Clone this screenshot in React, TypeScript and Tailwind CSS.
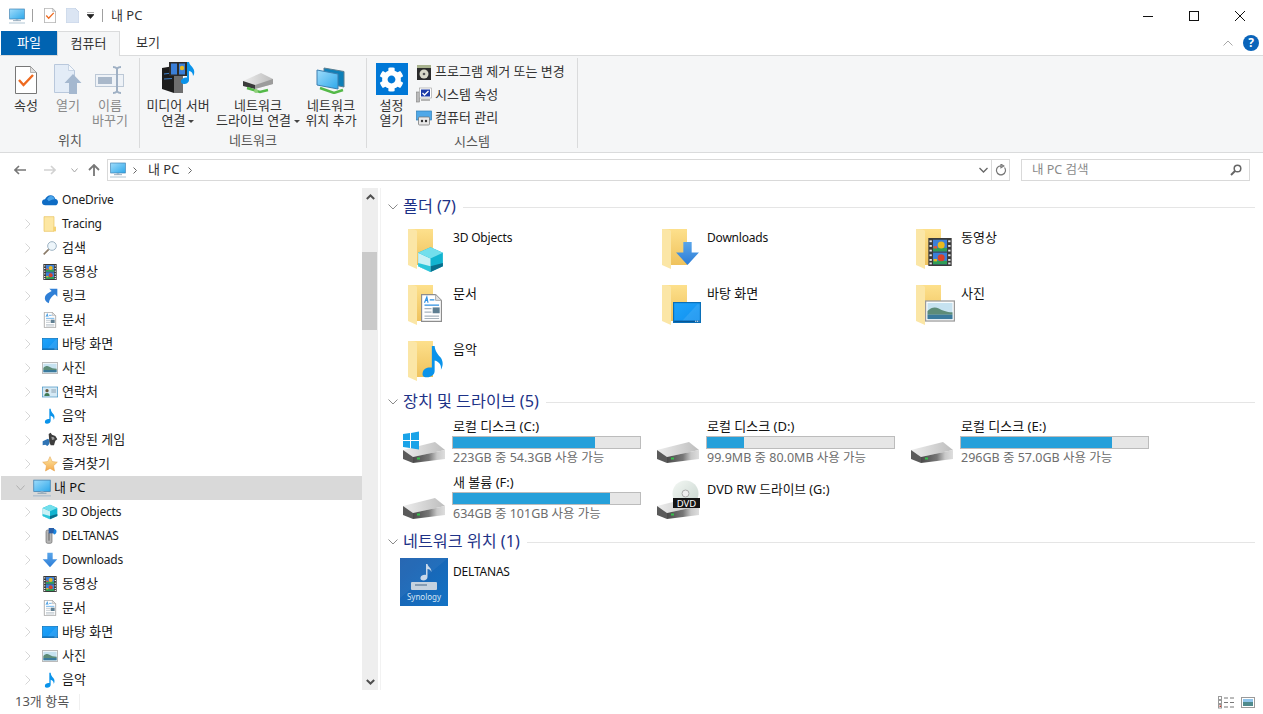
import * as React from "react";
import { FaCog } from "react-icons/fa";

const FONT = "font-['Noto_Sans','Noto_Sans_CJK_KR',sans-serif]";

// latin labels run narrower than the hangul ones in the picture
function isLatin(label: string) {
  return /^[\x00-\x7f]+$/.test(label);
}

function labelSize(label: string) {
  return isLatin(label) ? "text-[12px] tracking-[-0.2px]" : "text-[13px]";
}

// all small glyphs are drawn on a 24x24 grid, so nav icons and folder overlays share them
function Cube() {
  return (
    <g>
      <path d="M12 1 23 6v12l-11 5L1 18V6z" fill="#12b4d0" />
      <path d="M1 6l11 5v12L1 18z" fill="#c9f1f5" />
      <path d="M12 1 23 6l-11 5L1 6z" fill="#72dfec" />
      <path d="M12 18l11-3v3l-11 5z" fill="#0a6f8c" />
      <path d="M12 18 1 15v3l11 5z" fill="#2cc6da" />
    </g>
  );
}

function ArrowDown() {
  return <path d="M8 1h8v10h7L12 23 1 11h7z" fill="url(#arrow)" />;
}

function Film() {
  return (
    <g>
      <rect x="2" y="0" width="20" height="24" fill="#3a3a3a" />
      <rect x="6" y="1.5" width="12" height="10" fill="#3b7fd8" />
      <rect x="6" y="12.5" width="12" height="10" fill="#3b7fd8" />
      <rect x="6" y="8.5" width="12" height="3" fill="#2f9e57" />
      <rect x="6" y="19.5" width="12" height="3" fill="#2f9e57" />
      <circle cx="13" cy="6" r="3" fill="#e8b91f" />
      <circle cx="13" cy="17" r="3" fill="#d8432a" />
      <rect x="6.5" y="7" width="3" height="2" fill="#e0553a" />
      <rect x="6.5" y="18" width="3" height="2" fill="#e8b91f" />
      {[2, 6, 10, 14, 18, 21].map((y) => (
        <g key={y}>
          <rect x="3" y={y} width="2" height="1.6" fill="#e6e6e6" />
          <rect x="19" y={y} width="2" height="1.6" fill="#e6e6e6" />
        </g>
      ))}
    </g>
  );
}

function Doc() {
  return (
    <g>
      <path d="M3.5.5h12l5 5v18h-17z" fill="#fff" stroke="#8d8d8d" />
      <path d="M15.5.5v5h5z" fill="#e2e2e2" stroke="#a0a0a0" strokeWidth=".7" />
      <path d="M6 7.500l2-5 1 5M6.500 5.500h2.500" stroke="#2d8fe0" strokeWidth="1" fill="none" />
      <path d="M10.500 5h4M6 9.500h12.500" stroke="#2d8fe0" strokeWidth="1" />
      <path d="M6 12.500h6M6 15.500h6M6 19h12.500M6 21h12.500" stroke="#a8b4bd" strokeWidth="1" />
      <rect x="13" y="11.500" width="6" height="5" fill="#5f7f92" />
    </g>
  );
}

function Desk() {
  return (
    <g>
      <rect x="0.5" y="3.5" width="23" height="17" fill="url(#desk)" stroke="#0a6fb8" />
      <path d="M8 19 21 5h2v14z" fill="#ffffff" opacity=".1" />
      <path d="M1 19.5h22" stroke="#064c86" />
      <path d="M19 19.5h3.5" stroke="#fff" strokeDasharray="1 .6" />
    </g>
  );
}

function Photo() {
  return (
    <g>
      <rect x="0.5" y="4" width="23" height="16" fill="#fff" stroke="#9a9a9a" />
      <rect x="2" y="5.5" width="20" height="13" fill="#c6e2f0" />
      <path d="M2 12c3-3 6-3.500 9-2s6 3 11 3v2H2z" fill="#5d8c78" />
      <rect x="2" y="15" width="20" height="3.500" fill="#3a7a9c" />
    </g>
  );
}

function Note() {
  return (
    <path
      d="M11 1h2c.4 4 2 5.500 4 8s2.500 6 .5 9c.4-3-.800-5.500-4.500-6.500V19c0 2.500-2.500 4.500-5.500 4.500S4 22 4.500 19.800 7.500 16 11 16.500z"
      fill="#0a93ea"
    />
  );
}

function Contact() {
  return (
    <g>
      <rect x="0.5" y="4.500" width="23" height="15" fill="#d5e9f5" stroke="#3f8fc0" />
      <circle cx="7.500" cy="10" r="2.500" fill="#6b5a3c" />
      <path d="M3.500 18c0-3 1.500-4.500 4-4.500s4 1.500 4 4.500z" fill="#3f7a55" />
      <path d="M14 9h7M14 12h7" stroke="#7b8e9c" strokeWidth="1.200" />
    </g>
  );
}

function Games() {
  return (
    <g>
      <path d="M1 14l8-4 2 2v6l-3 3-3-2-4 1z" fill="#2f74b5" />
      <path d="M10 3l3-2 2 3 5 2 3 5-3 2-2 7h-5l-2-5z" fill="#3d3d3d" />
      <path d="M14 7l4 1 1 3-4 1z" fill="#9a9a9a" />
    </g>
  );
}

function Star() {
  return (
    <path
      d="M12 1l3.300 7.300 7.700.9-5.700 5.400 1.500 7.900L12 18.600 5.200 22.500l1.500-7.900L1 9.200l7.700-.9z"
      fill="url(#star)"
      stroke="#e0973a"
      strokeWidth=".7"
    />
  );
}

function Magnifier() {
  return (
    <g fill="none">
      <circle cx="15" cy="9" r="6.500" fill="#eef6fb" stroke="#9fb4c4" strokeWidth="1.500" />
      <path d="M10 14 2.500 21.500" stroke="#8a7a68" strokeWidth="2.400" />
    </g>
  );
}

function LinkArrow() {
  return (
    <path
      d="M11 1h12v12l-3.500-3.500C15 12 11.500 16 10 23 5.500 20.500 3.500 17 4.500 13 5.500 9.500 10 7 14.500 4.500z"
      fill="#2f7fd6"
    />
  );
}

function Cloud() {
  return (
    <g>
      <path
        d="M5 20c-3 0-5-2-5-4.500S2 11 4.500 11C6 7.500 9 5 13 5c3.500 0 6 2.500 7 5.500 2.500.3 4 2.500 4 4.700S22 20 19.500 20z"
        fill="#0f6cc4"
      />
      <path d="M7.500 11C9 8 11 6 13.500 6c3 0 5 2.500 5.500 5-4 .5-7 2-9 3-1-1.500-1.500-2.500-2.500-3z" fill="#49a4ea" />
    </g>
  );
}

function NavFolder() {
  return (
    <g>
      <path d="M3 1h15v22H3z" fill="#fde7a3" stroke="#e8c35e" />
      <rect x="17" y="16" width="4" height="7" fill="#f5d272" />
    </g>
  );
}

function NasDrive() {
  return (
    <g>
      <rect x="6" y="3" width="9" height="20" rx="2.500" fill="#b5b5b5" stroke="#6b6b6b" />
      <rect x="9" y="7" width="3" height="12" fill="#8a8a8a" />
      <rect x="10" y="0" width="8" height="8" fill="#2a5fa8" />
      <path d="M18 1c3 1 5 3 3 7-1 2-3 2-4 1z" fill="#1c86e0" />
    </g>
  );
}

function MonitorGlyph() {
  return (
    <g>
      <rect x="1" y="1.500" width="22" height="15" fill="url(#screen)" stroke="#3c7fb0" />
      <rect x="10" y="16.500" width="4" height="2" fill="#9db6c8" />
      <path d="M6 19h12" stroke="#7f99ad" strokeWidth="1.200" />
      <path d="M0 22.500h24" stroke="#9db6c8" strokeWidth="1.200" />
    </g>
  );
}

function Glyph({ children, className = "w-4 h-4" }: { children: React.ReactNode; className?: string }) {
  return (
    <svg viewBox="0 0 24 24" className={`${className} shrink-0`}>
      {children}
    </svg>
  );
}

// big yellow folder with a glyph laid in its lower right corner
function BigFolder({ children, x, y, s }: { children: React.ReactNode; x: number; y: number; s: number }) {
  return (
    <svg viewBox="0 0 48 48" className="w-12 h-12 shrink-0">
      <path d="M8 5h25v36H17z" fill="url(#folderBack)" />
      <path d="M8 5c3 0 6 0 8 1 1 .500 1 1 1 2v37l-9-4z" fill="#fbe6a6" />
      <g transform={`translate(${x} ${y}) scale(${s / 24})`}>{children}</g>
    </svg>
  );
}

function Drive() {
  return (
    <g>
      <path d="M3 26 35 18l10 8-32 7z" fill="url(#driveTop)" />
      <path d="M3 26l10 7v6l-10-4z" fill="#5a5a5a" />
      <path d="M13 33l32-7v9l-32 4z" fill="url(#driveFront)" />
      <rect x="17" y="33.500" width="3" height="2" fill="#35c04a" />
    </g>
  );
}

function DriveIcon({ kind }: { kind?: "win" | "dvd" }) {
  return (
    <svg viewBox="0 0 48 48" className="w-12 h-12 shrink-0 mt-[8px]">
      <Drive />
      {kind === "win" && (
        <path d="M3 10l7-1v7H3zM11 9l8-1.500V16h-8zM3 17h7v7l-7-1zM11 17h8v8.500l-8-1.300z" fill="#1aa3e8" />
      )}
      {kind === "dvd" && (
        <g>
          <circle cx="31.500" cy="13.500" r="13" fill="url(#disc)" />
          <circle cx="31.500" cy="13.500" r="3.500" fill="#eee" stroke="#aaa" />
          <rect x="19" y="18" width="27" height="10" fill="#151515" />
          <text x="32.500" y="26.500" textAnchor="middle" fontSize="9.500" fill="#fff" fontFamily="Noto Sans">
            DVD
          </text>
        </g>
      )}
    </svg>
  );
}

function SynologyIcon() {
  return (
    <svg viewBox="0 0 48 48" className="w-12 h-12 shrink-0">
      <rect width="48" height="48" fill="url(#syno)" />
      <path d="M0 0h48L0 40z" fill="#fff" opacity=".05" />
      <path d="M26 6h1.500c.5 3 4 3.500 4 8-1-2-2-3-4-3v8c0 2-2 3.500-4 3.500s-3.500-1-3-3 3-3 5.500-2.500z" fill="#c8d8ea" />
      <rect x="11" y="24" width="26" height="8" rx="1" fill="#c5d2df" />
      <path d="M15 27h12" stroke="#6f8aa5" strokeWidth="1.500" />
      <text x="24" y="42" textAnchor="middle" fontSize="8" fill="#d5e4f3" fontFamily="Noto Sans">
        Synology
      </text>
    </svg>
  );
}

function PropsIcon({ size = "w-[22px] h-[28px]" }: { size?: string }) {
  return (
    <svg viewBox="0 0 22 28" className={size}>
      <path d="M.5.500h15l6 6v21H.5z" fill="#fff" stroke="#777" />
      <path d="M15.500.500v6h6z" fill="#ddd" stroke="#999" strokeWidth=".7" />
      <path d="M4 14l4.500 5L18 9" fill="none" stroke="#ee6a20" strokeWidth="2.400" />
    </svg>
  );
}

function OpenIcon() {
  return (
    <svg viewBox="0 0 28 30" className="w-[28px] h-[30px]">
      <path d="M.5.500h14l6 6v22H.5z" fill="#e3ecf7" stroke="#b9c8dc" />
      <path d="M14.500.500v6h6z" fill="#f5f8fc" stroke="#b9c8dc" strokeWidth=".7" />
      <path d="M19 10l8.500 9H23v11h-8V19h-4.500z" fill="#a5b8cf" />
    </svg>
  );
}

function RenameIcon() {
  return (
    <svg viewBox="0 0 30 28" className="w-[30px] h-[28px]">
      <rect x=".5" y="8.500" width="28" height="12" fill="#eef2f7" stroke="#bcc8d6" />
      <rect x="3" y="11" width="14" height="7" fill="#a9b8ca" />
      <path d="M18 1c2 0 3 .500 4 1.500C23 1.500 24 1 26 1M22 2.500v23M18 27c2 0 3-.500 4-1.500 1 1 2 1.500 4 1.500" fill="none" stroke="#9fb0c4" strokeWidth="2" />
    </svg>
  );
}

function MediaServerIcon() {
  return (
    <svg viewBox="0 0 34 32" className="w-[34px] h-[32px]">
      <path d="M1 6l12-2v27L1 27z" fill="#1d1d1d" />
      <path d="M13 4l9 3v24h-9z" fill="#6f6f6f" />
      <path d="M3 12l8-1M3 17l8-.500" stroke="#3e7fc8" strokeWidth="1.200" />
      <rect x="8" y="0" width="18" height="14" fill="#2c2c2c" />
      <rect x="10" y="1.500" width="6" height="11" fill="#3b7fd8" />
      <rect x="18" y="1.500" width="6" height="11" fill="#3b7fd8" />
      <circle cx="21" cy="6" r="2.200" fill="#e8b91f" />
      <path d="M26 0h2c.4 3 3 4 4.500 7s.5 6-.5 7c0-3-1.500-4.500-4-5v9c0 2.500-2.500 4-5 4s-3.500-1.500-3-3.500 3.500-3.500 6-3z" fill="#0a93ea" />
    </svg>
  );
}

function NetDriveIcon() {
  return (
    <svg viewBox="0 0 34 24" className="w-[34px] h-[24px]">
      <path d="M2 11 20 3l12 6v5l-18 5-12-3z" fill="url(#driveTop)" />
      <path d="M2 11l12 4v4L2 16z" fill="#3b3b3b" />
      <path d="M14 15l18-6v5l-18 5z" fill="#9c9c9c" />
      <path d="M6 18l13 4 8-2" fill="none" stroke="#54b948" strokeWidth="2.400" />
      <circle cx="15" cy="21" r="2" fill="#8fd07a" />
    </svg>
  );
}

function NetLocationIcon() {
  return (
    <svg viewBox="0 0 30 28" className="w-[30px] h-[28px]">
      <path d="M8 2l20 3.500V21L8 17z" fill="#0e7fb8" stroke="#5b7f92" />
      <path d="M1 4l21 4v15L1 19z" fill="url(#screen)" stroke="#3c7fb0" />
      <path d="M4 22l14 5 9-3" fill="none" stroke="#54b948" strokeWidth="2.400" />
    </svg>
  );
}

function UninstallIcon() {
  return (
    <svg viewBox="0 0 16 16" className="w-4 h-4 shrink-0">
      <rect x="1" y="1" width="14" height="4" fill="#a9b38f" />
      <rect x="1" y="4" width="14" height="12" fill="#2b2b2b" />
      <circle cx="8" cy="10" r="4.500" fill="#d8d8c8" />
      <circle cx="8" cy="10" r="1.300" fill="#555" />
    </svg>
  );
}

function SysPropsIcon() {
  return (
    <svg viewBox="0 0 16 16" className="w-4 h-4 shrink-0">
      <rect x="0.500" y="5" width="3" height="10" fill="#b9b9b9" stroke="#808080" strokeWidth=".6" />
      <rect x="3.500" y="1" width="12" height="10" fill="#fff" stroke="#9a9a9a" strokeWidth=".6" />
      <rect x="5" y="2.500" width="9" height="7" fill="#1c3aa8" />
      <path d="M6.500 6l2 2 4-4" fill="none" stroke="#fff" strokeWidth="1.300" />
      <rect x="5" y="12" width="9" height="2" fill="#b5b5b5" />
    </svg>
  );
}

function ManageIcon() {
  return (
    <svg viewBox="0 0 16 16" className="w-4 h-4 shrink-0">
      <rect x=".5" y="1" width="15" height="9" fill="#4fa8e8" stroke="#2f7fb8" strokeWidth=".7" />
      <rect x="2.500" y="7" width="11" height="8" rx="1" fill="#e8e8e8" stroke="#6f6f6f" strokeWidth=".7" />
      <circle cx="6" cy="11" r="1.200" fill="#333" />
      <circle cx="10" cy="11" r="1.200" fill="#333" />
    </svg>
  );
}

function Defs() {
  return (
    <svg className="block w-0 h-0">
      <defs>
        <linearGradient id="folderBack" x1="0" y1="0" x2="0" y2="1">
          <stop offset="0" stopColor="#fde08c" />
          <stop offset="1" stopColor="#efc25c" />
        </linearGradient>
        <linearGradient id="arrow" x1="0" y1="0" x2="0" y2="1">
          <stop offset="0" stopColor="#5aa6ea" />
          <stop offset="1" stopColor="#2c7cd6" />
        </linearGradient>
        <linearGradient id="desk" x1="0" y1="0" x2="1" y2="1">
          <stop offset="0" stopColor="#1fa4fb" />
          <stop offset="1" stopColor="#0f8fee" />
        </linearGradient>
        <linearGradient id="screen" x1="0" y1="0" x2="1" y2="1">
          <stop offset="0" stopColor="#9fdcfb" />
          <stop offset="1" stopColor="#2ea8ea" />
        </linearGradient>
        <linearGradient id="star" x1="0" y1="0" x2="0" y2="1">
          <stop offset="0" stopColor="#fde9a8" />
          <stop offset="1" stopColor="#f5a94a" />
        </linearGradient>
        <linearGradient id="driveTop" x1="0" y1="0" x2="1" y2="0">
          <stop offset="0" stopColor="#ededed" />
          <stop offset="1" stopColor="#bdbdbd" />
        </linearGradient>
        <linearGradient id="driveFront" x1="0" y1="0" x2="1" y2="0">
          <stop offset="0" stopColor="#4a4a4a" />
          <stop offset=".5" stopColor="#777777" />
          <stop offset=".75" stopColor="#c8c8c8" />
          <stop offset="1" stopColor="#dedede" />
        </linearGradient>
        <linearGradient id="disc" x1="0" y1="0" x2="1" y2="1">
          <stop offset="0" stopColor="#f4f8f4" />
          <stop offset="1" stopColor="#c7d4ce" />
        </linearGradient>
        <linearGradient id="syno" x1="0" y1="0" x2="1" y2="1">
          <stop offset="0" stopColor="#1d5fae" />
          <stop offset="1" stopColor="#1272c4" />
        </linearGradient>
      </defs>
    </svg>
  );
}

function Caret() {
  return <span className="inline-block ml-[3px] align-middle border-x-[3px] border-t-[3px] border-x-transparent border-t-[#444]" />;
}

function RibbonButton({ icon, lines, muted, center }: { icon: React.ReactNode; lines: React.ReactNode[]; muted?: boolean; center: string }) {
  return (
    <div className={`flex flex-col items-center shrink-0 ${center}`}>
      <div className="h-[38px] pb-[2px] flex items-end justify-center">{icon}</div>
      <div className={`mt-[2px] text-center text-[13px] leading-[15px] whitespace-nowrap ${muted ? "text-[#8a8a8a]" : "text-[#333]"}`}>
        {lines.map((l, i) => (
          <div key={i}>{l}</div>
        ))}
      </div>
    </div>
  );
}

function RibbonGroup({ label, width, children }: { label: string; width: string; children: React.ReactNode }) {
  return (
    <div className={`${width} h-[90px] mt-[2px] border-r border-[#dadbdc] flex flex-col shrink-0`}>
      <div className="flex-1 flex">{children}</div>
      <div className="h-[22px] text-center text-[13px] leading-[24px] text-[#555]">{label}</div>
    </div>
  );
}

const navRows: { label: string; glyph: React.ReactNode; noChevron?: boolean }[] = [
  { label: "OneDrive", glyph: <Cloud />, noChevron: true },
  { label: "Tracing", glyph: <NavFolder /> },
  { label: "검색", glyph: <Magnifier /> },
  { label: "동영상", glyph: <Film /> },
  { label: "링크", glyph: <LinkArrow /> },
  { label: "문서", glyph: <Doc /> },
  { label: "바탕 화면", glyph: <Desk /> },
  { label: "사진", glyph: <Photo /> },
  { label: "연락처", glyph: <Contact /> },
  { label: "음악", glyph: <Note /> },
  { label: "저장된 게임", glyph: <Games /> },
  { label: "즐겨찾기", glyph: <Star /> },
];

const pcRows: { label: string; glyph: React.ReactNode }[] = [
  { label: "3D Objects", glyph: <Cube /> },
  { label: "DELTANAS", glyph: <NasDrive /> },
  { label: "Downloads", glyph: <ArrowDown /> },
  { label: "동영상", glyph: <Film /> },
  { label: "문서", glyph: <Doc /> },
  { label: "바탕 화면", glyph: <Desk /> },
  { label: "사진", glyph: <Photo /> },
  { label: "음악", glyph: <Note /> },
];

function NavChevron() {
  return (
    <svg viewBox="0 0 6 10" className="w-[6px] h-[10px] shrink-0">
      <path d="M.5.500 5 5 .5 9.500" fill="none" stroke="#d6d6d6" />
    </svg>
  );
}

function NavRow({ label, glyph, noChevron }: { label: string; glyph: React.ReactNode; noChevron?: boolean }) {
  return (
    <div className="h-6 flex items-center pl-[24px] shrink-0">
      {noChevron ? <span className="w-[6px]" /> : <NavChevron />}
      <span className="ml-[11px]">
        <Glyph>{glyph}</Glyph>
      </span>
      <span className={`ml-[4px] text-[#1a1a1a] whitespace-nowrap ${labelSize(label)}`}>{label}</span>
    </div>
  );
}

function SectionHeader({ title, className = "" }: { title: string; className?: string }) {
  return (
    <div className={`h-[24px] flex items-center shrink-0 ${className}`}>
      <svg viewBox="0 0 10 6" className="w-[10px] h-[6px] ml-[7px] shrink-0">
        <path d="M.5.500 5 5 9.500.500" fill="none" stroke="#8a8a8a" />
      </svg>
      <span className="ml-[5px] -mt-[2px] text-[16.2px] text-[#1e3287] whitespace-nowrap">{title}</span>
      <span className="ml-[7px] h-px flex-1 bg-[#e5e5e5]" />
    </div>
  );
}

function FolderItem({ label, children }: { label: string; children: React.ReactNode }) {
  return (
    <div className="h-[56px] flex items-start">
      {children}
      <span className={`ml-[5px] leading-[18px] text-[#111] whitespace-nowrap ${labelSize(label)} ${isLatin(label) ? "mt-[5px]" : "mt-[4px]"}`}>{label}</span>
    </div>
  );
}

const drives = [
  { label: "로컬 디스크 (C:)", info: "223GB 중 54.3GB 사용 가능", pct: 76, kind: "win" as const },
  { label: "로컬 디스크 (D:)", info: "99.9MB 중 80.0MB 사용 가능", pct: 20 },
  { label: "로컬 디스크 (E:)", info: "296GB 중 57.0GB 사용 가능", pct: 81 },
  { label: "새 볼륨 (F:)", info: "634GB 중 101GB 사용 가능", pct: 84 },
];

function DriveItem({ label, info, pct, kind }: { label: string; info: string; pct: number; kind?: "win" }) {
  return (
    <div className="h-[56px] flex items-start">
      <DriveIcon kind={kind} />
      <div className="ml-[4px] w-[189px] pt-[4px]">
        <div className="ml-px mb-[3px] text-[13px] leading-[13px] text-[#111] whitespace-nowrap">{label}</div>
        <div className="h-[13px] border border-[#bcbcbc] bg-[#e6e6e6]">
          <div className="h-full bg-[#26a0da]" style={{ width: `${pct}%` }} />
        </div>
        <div className="ml-px mt-[2px] text-[12.5px] leading-[13px] text-[#6d6d6d] whitespace-nowrap">{info}</div>
      </div>
    </div>
  );
}

export default function App() {
  return (
    <div className={`${FONT} w-[1263px] h-[714px] bg-white overflow-hidden flex flex-col text-[12px] text-[#111]`}>
      <Defs />

      {/* title bar */}
      <div className="h-[31px] flex items-center shrink-0 pl-[9px]">
        <Glyph className="w-4 h-4">
          <MonitorGlyph />
        </Glyph>
        <span className="ml-[7px] w-px h-[13px] bg-[#a0a0a0]" />
        <span className="ml-[11px]">
          <PropsIcon size="w-[12px] h-[15px]" />
        </span>
        <svg viewBox="0 0 13 15" className="ml-[10px] w-[13px] h-[15px]">
          <path d="M0 0h9l4 4v11H0z" fill="#dbe5f3" stroke="#c6d3e6" />
        </svg>
        <svg viewBox="0 0 7 7" className="ml-[8px] w-[7px] h-[7px]">
          <path d="M0 0h7M0 2.500h7l-3.500 4z" stroke="#222" fill="#222" strokeWidth=".7" />
        </svg>
        <span className="ml-[8px] w-px h-[13px] bg-[#a0a0a0]" />
        <span className="ml-[8px] text-[13px] text-[#333]">내 PC</span>
        <div className="ml-auto flex h-full">
          {[
            <path key="m" d="M0 5.500h10" stroke="#111" />,
            <rect key="x" x=".5" y=".5" width="9" height="9" fill="none" stroke="#111" />,
            <path key="c" d="M0 0l10 10M10 0 0 10" stroke="#111" />,
          ].map((p, i) => (
            <div key={i} className="w-[46px] flex items-center justify-center">
              <svg viewBox="0 0 10 10" className="w-[10px] h-[10px]">
                {p}
              </svg>
            </div>
          ))}
        </div>
      </div>

      {/* tabs */}
      <div className="h-[25px] flex shrink-0 pl-px border-b border-[#dadbdc]">
        <div className="w-[56px] h-[24px] bg-[#0063b1] text-white flex items-center justify-center text-[13px]">파일</div>
        <div className="w-[63px] h-[25px] relative bg-[#f5f6f7] border-x border-t border-[#dadbdc] flex items-center justify-center text-[13px] text-[#333]">컴퓨터</div>
        <div className="w-[56px] flex items-center justify-center text-[13px] text-[#333]">보기</div>
        <div className="ml-auto flex items-center pr-[4px]">
          <svg viewBox="0 0 10 6" className="w-[10px] h-[6px]">
            <path d="M.5 5.500 5 1l4.500 4.500" fill="none" stroke="#a8a8a8" />
          </svg>
          <span className="ml-[10px] w-4 h-4 rounded-full bg-[#0a64ba] text-white font-bold text-[12px] leading-4 text-center">?</span>
        </div>
      </div>

      {/* ribbon */}
      <div className="h-[97px] bg-[#f5f6f7] border-b border-[#dadbdc] flex shrink-0 pl-[1px]">
        <RibbonGroup label="위치" width="w-[139px]">
          <RibbonButton center="w-[50px]" icon={<PropsIcon />} lines={["속성"]} />
          <RibbonButton center="w-[34px]" muted icon={<OpenIcon />} lines={["열기"]} />
          <RibbonButton center="w-[50px]" muted icon={<RenameIcon />} lines={["이름", "바꾸기"]} />
        </RibbonGroup>
        <RibbonGroup label="네트워크" width="w-[227px]">
          <div className="w-px shrink-0" />
          <RibbonButton center="w-[74px]" icon={<MediaServerIcon />} lines={["미디어 서버", <>연결<Caret /></>]} />
          <RibbonButton center="w-[86px]" icon={<NetDriveIcon />} lines={["네트워크", <>드라이브 연결<Caret /></>]} />
          <RibbonButton center="w-[60px]" icon={<NetLocationIcon />} lines={["네트워크", "위치 추가"]} />
        </RibbonGroup>
        <RibbonGroup label="시스템" width="w-[211px]">
          <div className="w-[49px] flex flex-col items-center">
            <div className="mt-[5px] w-[32px] h-[32px] bg-[#0078d7] flex items-center justify-center text-white">
              <FaCog className="w-[25px] h-[25px]" />
            </div>
            <div className="mt-[3px] text-center text-[13px] leading-[15px] text-[#333]">
              <div>설정</div>
              <div>열기</div>
            </div>
          </div>
          <div className="flex flex-col mt-[2px]">
            {[
              { icon: <UninstallIcon />, label: "프로그램 제거 또는 변경" },
              { icon: <SysPropsIcon />, label: "시스템 속성" },
              { icon: <ManageIcon />, label: "컴퓨터 관리" },
            ].map((it) => (
              <div key={it.label} className="h-[23px] flex items-center">
                {it.icon}
                <span className="ml-[3px] text-[13px] text-[#333] whitespace-nowrap">{it.label}</span>
              </div>
            ))}
          </div>
        </RibbonGroup>
      </div>

      {/* address bar */}
      <div className="h-[35px] flex items-start pt-[6px] shrink-0">
        <div className="w-[107px] h-[22px] flex items-center shrink-0 pl-[14px]">
          <svg viewBox="0 0 12 10" className="w-[12px] h-[10px]">
            <path d="M12 5H1M5 1 1 5l4 4" fill="none" stroke="#777" strokeWidth="1.600" />
          </svg>
          <svg viewBox="0 0 12 10" className="ml-[18px] w-[12px] h-[10px]">
            <path d="M0 5h11M7 1l4 4-4 4" fill="none" stroke="#d2d2d2" strokeWidth="1.600" />
          </svg>
          <svg viewBox="0 0 7 5" className="ml-[15px] w-[7px] h-[5px]">
            <path d="M.5.500 3.500 4l3-3.500" fill="none" stroke="#a5a5a5" />
          </svg>
          <svg viewBox="0 0 12 12" className="ml-[10px] w-[12px] h-[12px]">
            <path d="M6 12V1M1 6l5-5 5 5" fill="none" stroke="#777" strokeWidth="1.800" />
          </svg>
        </div>
        <div className="w-[903px] h-[22px] border border-[#d9d9d9] flex items-center shrink-0 pl-[2px]">
          <Glyph className="w-4 h-4">
            <MonitorGlyph />
          </Glyph>
          <svg viewBox="0 0 4 7" className="ml-[7px] w-[4px] h-[7px]">
            <path d="M.5.500 3.500 3.500.5 6.500" fill="none" stroke="#666" />
          </svg>
          <span className="ml-[11px] text-[13px] text-[#333]">내 PC</span>
          <svg viewBox="0 0 4 7" className="ml-[9px] w-[4px] h-[7px]">
            <path d="M.5.500 3.500 3.500.5 6.500" fill="none" stroke="#666" />
          </svg>
          <svg viewBox="0 0 9 6" className="ml-auto w-[9px] h-[6px]">
            <path d="M.5 1 4.500 5l4-4" fill="none" stroke="#666" strokeWidth="1.300" />
          </svg>
          <span className="ml-[3px] w-px h-full bg-[#d9d9d9]" />
          <svg viewBox="0 0 12 12" className="ml-[3px] mr-[2px] w-[12px] h-[12px]">
            <path d="M9.500 3.500a4.500 4.500 0 1 1-3.500-1.700M6 .2v3.500l2.800-1.800z" fill="none" stroke="#777" strokeWidth="1.200" />
          </svg>
        </div>
        <div className="ml-[11px] w-[229px] h-[22px] border border-[#d9d9d9] flex items-center shrink-0 pl-[10px] pr-[7px]">
          <span className="text-[12.5px] text-[#8a8a8a]">내 PC 검색</span>
          <svg viewBox="0 0 12 12" className="ml-auto w-[12px] h-[12px]">
            <circle cx="7.500" cy="4.500" r="3.300" fill="none" stroke="#666" strokeWidth="1.500" />
            <path d="M5 7 1 11" stroke="#666" strokeWidth="2" />
          </svg>
        </div>
      </div>

      {/* body */}
      <div className="flex-1 min-h-0 flex">
        {/* nav pane */}
        <div className="w-[361px] ml-px shrink-0 overflow-hidden flex flex-col">
          {navRows.map((r) => (
            <NavRow key={r.label} {...r} />
          ))}
          <div className="h-6 bg-[#d9d9d9] flex items-center pl-[15px] shrink-0">
            <svg viewBox="0 0 9 6" className="w-[9px] h-[6px]">
              <path d="M.5.500 4.500 5l4-4.500" fill="none" stroke="#b0b0b0" />
            </svg>
            <span className="ml-[8px]">
              <Glyph className="w-[18px] h-[18px]">
                <MonitorGlyph />
              </Glyph>
            </span>
            <span className="ml-[3px] text-[13px] text-[#111]">내 PC</span>
          </div>
          {pcRows.map((r) => (
            <NavRow key={r.label} {...r} />
          ))}
        </div>

        {/* nav scrollbar */}
        <div className="w-[16px] shrink-0 bg-[#eeeeee] flex flex-col">
          <div className="h-[17px] flex items-center justify-center">
            <svg viewBox="0 0 9 6" className="w-[9px] h-[6px]">
              <path d="M.8 5 4.500 1.500 8.200 5" fill="none" stroke="#505050" strokeWidth="2" />
            </svg>
          </div>
          <div className="mt-[47px] h-[78px] w-[15px] bg-[#cacaca]" />
          <div className="mt-auto h-[17px] flex items-center justify-center">
            <svg viewBox="0 0 9 6" className="w-[9px] h-[6px]">
              <path d="M.8 1 4.500 4.500 8.200 1" fill="none" stroke="#505050" strokeWidth="2" />
            </svg>
          </div>
        </div>

        {/* content */}
        <div className="flex-1 min-w-0 ml-[2px] border-l border-[#f2f2f2] pt-[7px] pr-[8px] flex flex-col">
          <SectionHeader title="폴더 (7)" />
          <div className="grid grid-cols-[254px_254px_254px] ml-[19px] pt-[5px]">
            <FolderItem label="3D Objects"><BigFolder x={17} y={22} s={27}><Cube /></BigFolder></FolderItem>
            <FolderItem label="Downloads"><BigFolder x={21} y={17} s={25}><ArrowDown /></BigFolder></FolderItem>
            <FolderItem label="동영상"><BigFolder x={18} y={14} s={28}><Film /></BigFolder></FolderItem>
            <FolderItem label="문서"><BigFolder x={17.5} y={14} s={28}><Doc /></BigFolder></FolderItem>
            <FolderItem label="바탕 화면"><BigFolder x={19} y={18.500} s={28}><Desk /></BigFolder></FolderItem>
            <FolderItem label="사진"><BigFolder x={17} y={16} s={30}><Photo /></BigFolder></FolderItem>
            <FolderItem label="음악"><BigFolder x={16.500} y={8.500} s={33.500}><Note /></BigFolder></FolderItem>
          </div>
          <SectionHeader title="장치 및 드라이브 (5)" className="-mt-[2px]" />
          <div className="grid grid-cols-[254px_254px_254px] ml-[19px] pt-[2px] pb-[2px]">
            {drives.map((d) => (
              <DriveItem key={d.label} {...d} />
            ))}
            <div className="h-[56px] flex items-start">
              <DriveIcon kind="dvd" />
              <span className="ml-[5px] mt-[8px] text-[12.7px] text-[#111] whitespace-nowrap">DVD RW 드라이브 (G:)</span>
            </div>
          </div>
          <SectionHeader title="네트워크 위치 (1)" />
          <div className="ml-[19px] pt-[4px] flex items-start">
            <SynologyIcon />
            <span className="ml-[5px] mt-[5px] text-[12px] tracking-[-0.2px] text-[#111]">DELTANAS</span>
          </div>
        </div>
      </div>

      {/* status bar */}
      <div className="h-[24px] shrink-0 flex items-center pl-[15px] pr-[8px]">
        <span className="text-[13px] text-[#555]">13개 항목</span>
        <span className="ml-[10px] w-px h-[16px] bg-[#f0f0f0]" />
        <svg viewBox="0 0 17 13" className="ml-auto w-[17px] h-[13px]">
          <g fill="none" stroke="#9a9a9a">
            <rect x=".5" y=".5" width="3" height="3" />
            <rect x=".5" y="4.500" width="3" height="3" />
            <rect x=".5" y="8.500" width="3" height="3.500" />
          </g>
          <rect x="1.500" y="9.500" width="1.500" height="1.500" fill="#c0392b" />
          <path d="M6 2h4M12 2h4M6 6.500h4M12 6.500h4M6 11h4M12 11h4" stroke="#777" />
        </svg>
        <svg viewBox="0 0 14 11" className="ml-[6px] w-[14px] h-[11px]">
          <rect x=".5" y=".5" width="13" height="10" fill="#fff" stroke="#9a9a9a" />
          <rect x="2" y="2" width="10" height="3" fill="#8fc4ea" />
          <rect x="2" y="5" width="10" height="4" fill="#4f8a8c" />
        </svg>
      </div>
    </div>
  );
}
